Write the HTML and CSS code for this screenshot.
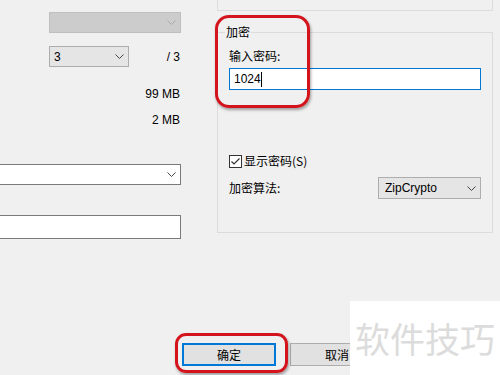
FILE: index.html
```html
<!doctype html>
<html lang="zh-CN">
<head>
    <meta charset="utf-8">
    <title>压缩选项</title>
    <link rel="stylesheet" href="styles.css">
</head>
<body>
    <div class="dialog">
        <div class="cols">
            <div class="left">
                <div class="select select-disabled">
                    <span></span>
                    <svg class="chev" width="9" height="5" viewBox="0 0 9 5"><polyline points="0.5,0.5 4.5,4.5 8.5,0.5" fill="none" stroke="#a8a8a8"/></svg>
                </div>
                <div class="row-vol">
                    <div class="select select-vol">
                        <span>3</span>
                        <svg class="chev" width="9" height="5" viewBox="0 0 9 5"><polyline points="0.5,0.5 4.5,4.5 8.5,0.5" fill="none" stroke="#444"/></svg>
                    </div>
                    <span class="vol-total">/ 3</span>
                </div>
                <div class="size size-first">99 MB</div>
                <div class="size">2 MB</div>
                <div class="select select-white">
                    <span></span>
                    <svg class="chev" width="9" height="5" viewBox="0 0 9 5"><polyline points="0.5,0.5 4.5,4.5 8.5,0.5" fill="none" stroke="#444"/></svg>
                </div>
                <div class="textbox"></div>
            </div>

            <div class="right">
                <div class="top-box"></div>
                <fieldset class="group">
                    <legend>加密</legend>
                    <div class="label label-pass">输入密码:</div>
                    <div class="textbox textbox-focus"><span>1024</span><i class="caret"></i></div>
                    <div class="check-row">
                        <svg class="check" width="13" height="13" viewBox="0 0 13 13">
                            <rect x="0.5" y="0.5" width="12" height="12" fill="#fff" stroke="#333"/>
                            <polyline points="2.5,6.5 5,9 10.5,3.5" fill="none" stroke="#333" stroke-width="1.2"/>
                        </svg>
                        <span>显示密码(S)</span>
                    </div>
                    <div class="algo-row">
                        <span class="label">加密算法:</span>
                        <div class="select select-algo">
                            <span>ZipCrypto</span>
                            <svg class="chev" width="9" height="5" viewBox="0 0 9 5"><polyline points="0.5,0.5 4.5,4.5 8.5,0.5" fill="none" stroke="#444"/></svg>
                        </div>
                    </div>
                </fieldset>
            </div>
        </div>

        <div class="buttons">
            <button class="btn btn-ok">确定</button>
            <button class="btn">取消</button>
        </div>
    </div>

    <!-- highlight marks and watermark over the screenshot -->
    <div class="mark mark-pass"></div>
    <div class="mark mark-ok"></div>
    <div class="watermark">软件技巧</div>
</body>
</html>
```

FILE: styles.css
```css
body {
    margin: 0;
    background-color: #f0f0f0;
    font-family: "Liberation Sans", "Noto Sans CJK SC", sans-serif;
    font-size: 12px;
    line-height: 16px;
    color: #000;
    width: 500px;
    height: 375px;
    overflow: hidden;
    position: relative;
}
.dialog {
    display: flex;
    flex-direction: column;
}
.cols {
    display: flex;
    align-items: flex-start;
}
.left {
    width: 181px;
    display: flex;
    flex-direction: column;
}
.right {
    width: 276px;
    margin-left: 36px;
}

/* dropdowns */
.select {
    box-sizing: border-box;
    display: flex;
    align-items: center;
    justify-content: space-between;
    border: 1px solid #7a7a7a;
    background-color: #e5e5e5;
    padding: 0 4px 0 4px;
}
.select-disabled {
    margin: 12px 0 0 49px;
    height: 21px;
    background-color: #cccccc;
    border-color: #bfbfbf;
}
.row-vol {
    display: flex;
    align-items: center;
    margin: 13px 0 0 49px;
}
.select-vol {
    width: 80px;
    height: 21px;
    border-color: #adadad;
}
.vol-total {
    flex: 1;
    text-align: right;
    padding-right: 1px;
}
.size {
    text-align: right;
    margin-top: 10px;
    padding-right: 1px;
}
.size-first {
    margin-top: 19px;
}
.select-white {
    margin: 36px 0 0 -2px;
    height: 21px;
    background-color: #fff;
}
.select-algo {
    width: 103px;
    height: 22px;
    border-color: #adadad;
    padding-left: 6px;
}

/* text boxes */
.textbox {
    box-sizing: border-box;
    height: 24px;
    margin: 30px 0 0 -2px;
    border: 1px solid #7a7a7a;
    background-color: #fff;
}
.textbox-focus {
    display: flex;
    align-items: center;
    height: 22px;
    margin: 4px 0 0;
    padding-left: 4px;
    border-color: #0078d7;
}
.caret {
    display: block;
    width: 1px;
    height: 15px;
    background-color: #000;
}

/* group boxes */
.top-box {
    height: 10px;
    border: 1px solid #dcdcdc;
    border-top: none;
}
.group {
    margin: 13px 0 0;
    padding: 0 11px 33px;
    border: 1px solid #dcdcdc;
}
.group legend {
    margin-left: -4px;
    padding: 0 1px;
    font-family: "Noto Sans CJK SC", sans-serif;
}
.label {
    font-family: "Noto Sans CJK SC", sans-serif;
}
.label-pass {
    margin-top: 8px;
}
.check-row {
    display: flex;
    align-items: center;
    gap: 2px;
    margin-top: 63px;
    font-family: "Noto Sans CJK SC", sans-serif;
}
.algo-row {
    display: flex;
    align-items: center;
    justify-content: space-between;
    margin-top: 8px;
}

/* buttons */
.buttons {
    display: flex;
    gap: 14px;
    margin: 104px 0 0 182px;
}
.btn {
    box-sizing: border-box;
    width: 94px;
    height: 23px;
    padding: 0;
    border: 1px solid #adadad;
    background-color: #e1e1e1;
    font-family: "Noto Sans CJK SC", sans-serif;
    font-size: 12px;
    color: #000;
}
.btn-ok {
    border: 2px solid #0078d7;
}

/* red marks drawn on the screenshot */
.mark {
    position: absolute;
    box-sizing: border-box;
    border: 3px solid #d3141c;
    box-shadow: 1px 2px 3px rgba(0, 0, 0, 0.35);
}
.mark-pass {
    left: 215px;
    top: 15px;
    width: 95px;
    height: 93px;
    border-radius: 14px;
}
.mark-ok {
    left: 175px;
    top: 333px;
    width: 113px;
    height: 40px;
    border-radius: 11px;
}

.watermark {
    position: absolute;
    left: 350px;
    top: 301px;
    width: 150px;
    height: 74px;
    box-sizing: border-box;
    padding: 17px 0 0 5px;
    background-color: #fff;
    color: #dcdcdc;
    font-family: "Noto Sans CJK SC", sans-serif;
    font-size: 35px;
    line-height: 40px;
}
```
